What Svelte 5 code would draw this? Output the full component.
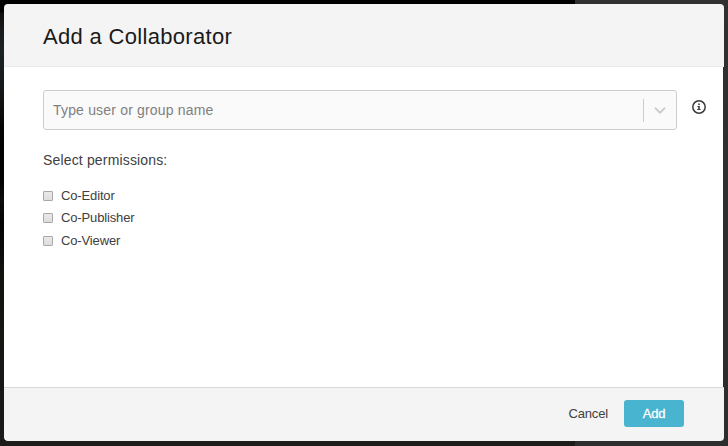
<script lang="ts">
  let query = $state('');

  let permissions = $state([
    { label: 'Co-Editor', checked: false },
    { label: 'Co-Publisher', checked: false },
    { label: 'Co-Viewer', checked: false }
  ]);
</script>

<div class="backdrop">
  <div class="modal" role="dialog" aria-modal="true" aria-labelledby="modal-title">
    <header class="modal-header">
      <h2 id="modal-title">Add a Collaborator</h2>
    </header>

    <div class="modal-body">
      <div class="search-row">
        <div class="select">
          <input type="text" placeholder="Type user or group name" bind:value={query} />
          <span class="select-separator"></span>
          <span class="select-arrow">
            <svg width="12" height="8" viewBox="0 0 12 8" aria-hidden="true">
              <path d="M1.6 1.4 L6 5.7 L10.4 1.4" fill="none" stroke="#cccccc" stroke-width="2" stroke-linecap="round" stroke-linejoin="round" />
            </svg>
          </span>
        </div>
        <svg class="info" width="16" height="16" viewBox="0 0 16 16" aria-hidden="true">
          <circle cx="8" cy="8" r="6.2" fill="none" stroke="#3a3a3a" stroke-width="1.5" />
          <path d="M7.2 4.6h1.6v1.4H7.2zM6.4 6.9h2.4v3.2h.8v1H6.3v-1h.9V7.9h-.8z" fill="#3a3a3a" />
        </svg>
      </div>

      <p class="permissions-title">Select permissions:</p>
      <ul class="permissions">
        {#each permissions as permission}
          <li>
            <label>
              <input type="checkbox" bind:checked={permission.checked} />
              <span>{permission.label}</span>
            </label>
          </li>
        {/each}
      </ul>
    </div>

    <footer class="modal-footer">
      <button class="cancel" type="button">Cancel</button>
      <button class="add" type="button">Add</button>
    </footer>
  </div>
</div>

<style>
  :global(body) {
    margin: 0;
    overflow: hidden;
  }

  .backdrop {
    box-sizing: border-box;
    width: 728px;
    height: 446px;
    padding: 4px 4px 5px;
    font-family: 'Liberation Sans', Arial, sans-serif;
    color: #404040;
    background:
      linear-gradient(#303030, #2d2d2d) 575px 0 / 153px 446px no-repeat,
      linear-gradient(#1d1c1b, #1d1c1b) 0 441px / 575px 5px no-repeat,
      linear-gradient(#000 0, #000 12px, #110e0e 13px, #171a1d 28px, #1c2225 50px, #15181a 90px, #040404 130px, #020202 180px, #0c0c0a 200px, #030302 225px, #12110e 270px, #171613 340px, #1a1a19 446px) 0 0 / 4px 446px no-repeat,
      #000;
  }

  .modal {
    display: flex;
    flex-direction: column;
    height: 437px;
    border-radius: 4px;
    overflow: hidden;
  }

  .modal-header {
    box-sizing: border-box;
    height: 63px;
    padding-left: 39px;
    display: flex;
    align-items: center;
    background: #f4f4f4;
    border-bottom: 1px solid #e9e9e9;
  }

  h2 {
    margin: 0;
    padding-top: 4px;
    font-size: 22px;
    line-height: 26px;
    font-weight: 400;
    letter-spacing: 0.32px;
    color: #1a1a1a;
  }

  .modal-body {
    box-sizing: border-box;
    flex: 1;
    margin-right: 1px;
    padding: 23px 16px 0 39px;
    background: #fff;
  }

  .search-row {
    display: flex;
    align-items: flex-start;
    gap: 14px;
  }

  .select {
    box-sizing: border-box;
    display: flex;
    align-items: center;
    width: 634px;
    height: 40px;
    background: #fafafa;
    border: 1px solid #cccccc;
    border-radius: 3px;
  }

  .select input {
    flex: 1;
    min-width: 0;
    height: 36px;
    padding: 0 0 0 9px;
    border: 0;
    outline: 0;
    background: transparent;
    font: 14px 'Liberation Sans', Arial, sans-serif;
    letter-spacing: 0.18px;
    color: #404040;
  }

  .select input::placeholder {
    color: #808080;
    opacity: 1;
  }

  .select-separator {
    width: 1px;
    height: 23px;
    background: #cccccc;
  }

  .select-arrow {
    display: flex;
    justify-content: center;
    width: 32px;
    padding-top: 2px;
  }

  .info {
    margin-top: 9px;
  }

  .permissions-title {
    margin: 21px 0 0;
    font-size: 14px;
    line-height: 18px;
    letter-spacing: 0.16px;
  }

  .permissions {
    margin: 15px 0 0;
    padding: 0;
    list-style: none;
  }

  .permissions li {
    height: 22.5px;
  }

  .permissions label {
    display: flex;
    align-items: center;
    height: 22.5px;
    font-size: 13px;
    letter-spacing: -0.14px;
  }

  .permissions input {
    appearance: none;
    box-sizing: border-box;
    width: 10px;
    height: 10px;
    margin: 1px 8px 0 0;
    border: 1px solid #a9a9a9;
    border-radius: 1px;
    background: linear-gradient(#e9e9e9, #dddddd);
  }

  .permissions input:checked {
    background: #48b4d0;
  }

  .modal-footer {
    box-sizing: border-box;
    height: 54px;
    padding: 0 40px 2px 0;
    display: flex;
    align-items: center;
    justify-content: flex-end;
    gap: 16px;
    background: #f4f4f4;
    border-top: 1px solid #d9d9d9;
  }

  button {
    height: 27px;
    padding: 0;
    border: 0;
    font: 13px 'Liberation Sans', Arial, sans-serif;
    letter-spacing: -0.15px;
  }

  .cancel {
    background: transparent;
    color: #404040;
  }

  .add {
    width: 60px;
    border-radius: 3px;
    background: #48b4d0;
    color: #fff;
    -webkit-text-stroke: 0.3px #fff;
  }
</style>
